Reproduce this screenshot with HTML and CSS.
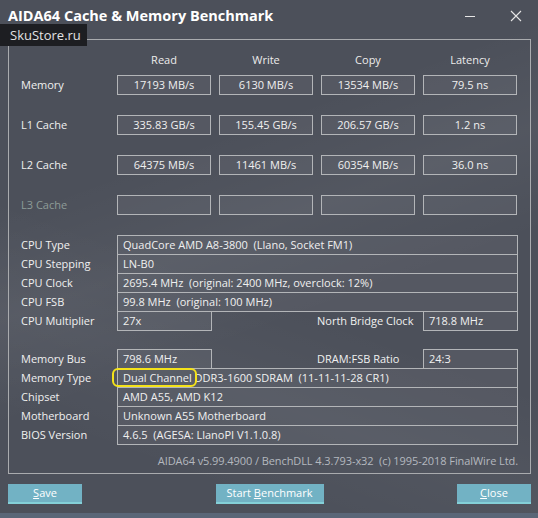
FILE: index.html
```html
<!DOCTYPE html>
<html>
<head>
<meta charset="utf-8">
<link rel="stylesheet" href="styles.css">
</head>
<body>
<div class="window">
  <div class="titlebar">
    <div class="title">AIDA64 Cache &amp; Memory Benchmark</div>
    <div class="controls">
      <svg class="ctl" width="12" height="12" viewBox="0 0 12 12"><line x1="1" y1="6.5" x2="11" y2="6.5" stroke="#e6e6e6" stroke-width="1"/></svg>
      <svg class="ctl close" width="12" height="12" viewBox="0 0 12 12"><path d="M1 1 L11 11 M11 1 L1 11" stroke="#e6e6e6" stroke-width="1.1" fill="none"/></svg>
    </div>
  </div>
  <div class="watermark">SkuStore.ru</div>

  <div class="group">
    <div class="bench head">
      <div></div>
      <div class="hcell">Read</div>
      <div class="hcell">Write</div>
      <div class="hcell">Copy</div>
      <div class="hcell">Latency</div>
    </div>
    <div class="bench rows">
      <div class="lbl">Memory</div>
      <div class="val c">17193 MB/s</div>
      <div class="val c">6130 MB/s</div>
      <div class="val c">13534 MB/s</div>
      <div class="val c">79.5 ns</div>

      <div class="lbl">L1 Cache</div>
      <div class="val c">335.83 GB/s</div>
      <div class="val c">155.45 GB/s</div>
      <div class="val c">206.57 GB/s</div>
      <div class="val c">1.2 ns</div>

      <div class="lbl">L2 Cache</div>
      <div class="val c">64375 MB/s</div>
      <div class="val c">11461 MB/s</div>
      <div class="val c">60354 MB/s</div>
      <div class="val c">36.0 ns</div>

      <div class="lbl dim">L3 Cache</div>
      <div class="val c"></div>
      <div class="val c"></div>
      <div class="val c"></div>
      <div class="val c"></div>
    </div>

    <div class="info cpu">
      <div class="irow"><div class="lbl">CPU Type</div><div class="val wide">QuadCore AMD A8-3800&nbsp; (Llano, Socket FM1)</div></div>
      <div class="irow"><div class="lbl">CPU Stepping</div><div class="val wide">LN-B0</div></div>
      <div class="irow"><div class="lbl">CPU Clock</div><div class="val wide">2695.4 MHz&nbsp; (original: 2400 MHz, overclock: 12%)</div></div>
      <div class="irow"><div class="lbl">CPU FSB</div><div class="val wide">99.8 MHz&nbsp; (original: 100 MHz)</div></div>
      <div class="irow"><div class="lbl">CPU Multiplier</div><div class="val small">27x</div><div class="lbl2">North Bridge Clock</div><div class="val small">718.8 MHz</div></div>
    </div>

    <div class="info mem">
      <div class="irow"><div class="lbl">Memory Bus</div><div class="val small">798.6 MHz</div><div class="lbl2">DRAM:FSB Ratio</div><div class="val small">24:3</div></div>
      <div class="irow"><div class="lbl">Memory Type</div><div class="val wide"><span class="hl">Dual Channel</span> DDR3-1600 SDRAM&nbsp; (11-11-11-28 CR1)</div></div>
      <div class="irow"><div class="lbl">Chipset</div><div class="val wide">AMD A55, AMD K12</div></div>
      <div class="irow"><div class="lbl">Motherboard</div><div class="val wide">Unknown A55 Motherboard</div></div>
      <div class="irow"><div class="lbl">BIOS Version</div><div class="val wide">4.6.5&nbsp; (AGESA: LlanoPI V1.1.0.8)</div></div>
    </div>

    <div class="footer">AIDA64 v5.99.4900 / BenchDLL 4.3.793-x32&nbsp; (c) 1995-2018 FinalWire Ltd.</div>
  </div>

  <div class="buttons">
    <div class="btn b-save"><u>S</u>ave</div>
    <div class="btn b-start">Start <u>B</u>enchmark</div>
    <div class="btn b-close"><u>C</u>lose</div>
  </div>
  <div class="strip"></div>
</div>
</body>
</html>
```

FILE: styles.css
```css
html, body {
  margin: 0;
  padding: 0;
}
body {
  width: 538px;
  height: 518px;
  overflow: hidden;
  font-family: "Open Sans", "Noto Sans", "Liberation Sans", sans-serif;
  font-size: 11px;
  color: #f0f0f0;
}
.window {
  position: relative;
  width: 538px;
  height: 518px;
  overflow: hidden;
  background:
    linear-gradient(160deg, rgba(255,255,255,0) 30%, rgba(255,255,255,0.04) 45%, rgba(255,255,255,0) 60%),
    linear-gradient(200deg, rgba(255,255,255,0) 55%, rgba(255,255,255,0.03) 70%, rgba(255,255,255,0) 85%),
    #4c505a;
  display: flex;
  flex-direction: column;
}
.titlebar {
  height: 39px;
  display: flex;
  justify-content: space-between;
  align-items: flex-start;
  box-sizing: border-box;
  padding: 6px 0 0 8px;
}
.title {
  font-weight: 700;
  font-size: 14.5px;
  color: #ffffff;
}
.controls {
  display: flex;
  gap: 34px;
  padding: 4px 16px 0 0;
}
.watermark {
  position: absolute;
  left: 0;
  top: 24px;
  width: 87px;
  height: 22px;
  background: #1d1e22;
  color: #e2e2e2;
  font-size: 13px;
  line-height: 22px;
  padding-left: 10px;
  box-sizing: border-box;
}
.group {
  margin-left: 8px;
  width: 523px;
  height: 435px;
  box-sizing: border-box;
  border: 1px solid #a9abae;
  padding: 10px 12px 0 12px;
}
.bench {
  display: grid;
  grid-template-columns: 88px repeat(4, 94px);
  column-gap: 8px;
}
.head {
  height: 20px;
  margin-bottom: 5px;
}
.hcell {
  text-align: center;
  line-height: 20px;
  color: #ececec;
}
.rows {
  grid-auto-rows: 20px;
  row-gap: 20px;
}
.lbl {
  line-height: 20px;
  white-space: nowrap;
}
.dim {
  color: #8d9c98;
}
.val {
  box-sizing: border-box;
  height: 20px;
  border: 1px solid #b3b5b8;
  background: rgba(255,255,255,0.05);
  line-height: 18px;
  white-space: nowrap;
  padding-left: 5px;
}
.val.c {
  text-align: center;
  padding-left: 0;
}
.info {
  display: flex;
  flex-direction: column;
}
.cpu {
  margin-top: 20px;
}
.mem {
  margin-top: 18px;
}
.irow {
  display: flex;
  height: 20px;
}
.irow + .irow {
  margin-top: -1px;
}
.irow > .lbl {
  width: 96px;
  flex: none;
}
.val.wide {
  flex: 1;
}
.val.small {
  width: 95px;
  flex: none;
}
.lbl2 {
  width: 211px;
  flex: none;
  box-sizing: border-box;
  padding-left: 105px;
  line-height: 20px;
  white-space: nowrap;
}
.hl {
  position: relative;
}
.hl::after {
  content: "";
  position: absolute;
  left: -11px;
  right: -5px;
  top: -2px;
  bottom: -2px;
  border: 2px solid #f4e21a;
  border-radius: 6px;
}
.footer {
  text-align: right;
  color: #b4b8bf;
  padding-top: 8px;
  line-height: 16px;
  letter-spacing: -0.08px;
}
.buttons {
  display: flex;
  justify-content: space-between;
  margin-top: 10px;
  padding: 0 7px 0 8px;
}
.btn {
  height: 20px;
  box-sizing: border-box;
  background: #72b2c4;
  border-bottom: 2px solid #84d0d8;
  color: #ffffff;
  text-align: center;
  line-height: 18px;
  font-size: 11px;
}
.b-save, .b-close {
  width: 74px;
}
.b-start {
  width: 108px;
}
.strip {
  margin-top: auto;
  height: 5px;
  background: #5a6677;
}
```
